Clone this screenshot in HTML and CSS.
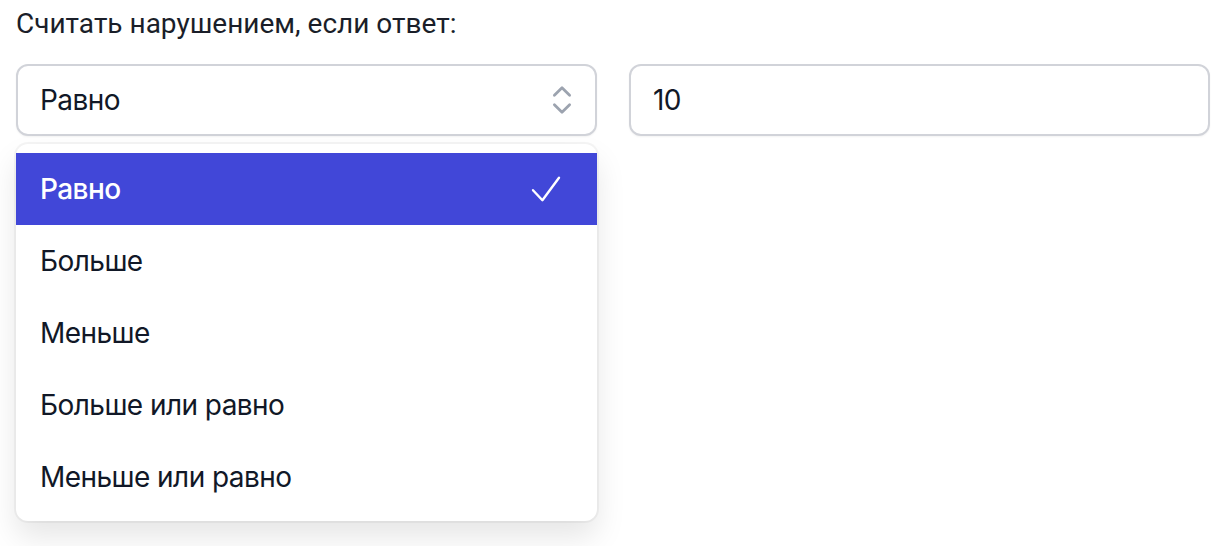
FILE: index.html
```html
<!DOCTYPE html>
<html lang="ru">
  <head>
    <meta charset="UTF-8" />
    <meta name="viewport" content="width=device-width, initial-scale=1.0" />
    <title>Условие нарушения</title>
    <link rel="stylesheet" href="styles.css">
  </head>
  <body>
    <div class="container">
      <div class="label">Считать нарушением, если ответ:</div>
      <div class="row">
        <!-- выбор условия -->
        <div class="listbox">
          <div class="select-btn">
            <span>Равно</span>
            <svg class="chevrons" width="40" height="40" viewBox="0 0 20 20" fill="none" stroke="#9ca3af" stroke-width="1.4" stroke-linecap="round" stroke-linejoin="round">
              <path d="M6.2 7.6L10 3.9l3.8 3.7" />
              <path d="M6.2 12.4L10 16.1l3.8-3.7" />
            </svg>
          </div>
          <div class="options">
            <div class="option active">
              <span>Равно</span>
              <svg class="check" width="40" height="40" viewBox="0 0 20 20" fill="none" stroke="#fff" stroke-width="1.2" stroke-linecap="round" stroke-linejoin="round">
                <path d="M4 10.6l4.7 5L17 4.4" />
              </svg>
            </div>
            <div class="option">Больше</div>
            <div class="option">Меньше</div>
            <div class="option">Больше или равно</div>
            <div class="option">Меньше или равно</div>
          </div>
        </div>
        <!-- значение -->
        <div class="value-input">10</div>
      </div>
    </div>
  </body>
</html>
```

FILE: styles.css
```css
body {
  margin: 0;
  background: #fff;
  font-family: Roboto, "Liberation Sans", sans-serif;
  color: #111827;
}
.container {
  padding: 4px 14px 40px 16px;
}
.label {
  font-size: 28px;
  line-height: 40px;
  color: #1a1e29;
}
.row {
  display: grid;
  grid-template-columns: 1fr 1fr;
  align-items: start;
  gap: 32px;
  margin-top: 20px;
}
.select-btn,
.value-input {
  height: 72px;
  box-sizing: border-box;
  border: 2px solid #d1d3d9;
  border-radius: 12px;
  background: #fff;
  font-family: Inter, Roboto, sans-serif;
  font-size: 28px;
  letter-spacing: -0.02em;
  color: #111827;
  padding: 0 22px;
  box-shadow: 0 1px 2px rgba(0, 0, 0, 0.05);
  display: flex;
  align-items: center;
}
.select-btn {
  justify-content: space-between;
  padding-right: 13px;
}
.options {
  margin-top: 8px;
  padding: 9px 0 8px;
  background: #fff;
  border-radius: 12px;
  box-shadow: 0 0 0 2px rgba(0, 0, 0, 0.04), 0 16px 30px rgba(0, 0, 0, 0.1);
}
.option {
  display: flex;
  align-items: center;
  justify-content: space-between;
  height: 72px;
  padding: 0 32px 0 24px;
  font-family: Inter, Roboto, sans-serif;
  font-size: 28px;
  letter-spacing: -0.02em;
  color: #111827;
}
.option.active {
  background: #4147d8;
  color: #fff;
  font-weight: 500;
}
```
